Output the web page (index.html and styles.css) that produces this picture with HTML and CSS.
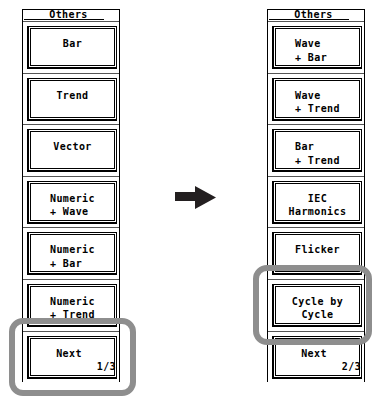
FILE: index.html
```html
<!DOCTYPE html>
<html lang="en">
<head>
  <meta charset="UTF-8" />
  <meta name="viewport" content="width=device-width, initial-scale=1.0"/>
  <title>Others menu</title>
  <link rel="stylesheet" href="styles.css">
</head>
<body>
  <div class="scene">
    <!-- page 1 of the Others soft-key menu -->
    <section class="panel">
      <div class="panel-title">Others</div>
      <div class="cell"><div class="key"><span class="label">Bar</span></div></div>
      <div class="cell"><div class="key"><span class="label">Trend</span></div></div>
      <div class="cell"><div class="key"><span class="label">Vector</span></div></div>
      <div class="cell"><div class="key"><span class="label stack">Numeric<br>+ Wave</span></div></div>
      <div class="cell"><div class="key"><span class="label stack">Numeric<br>+ Bar</span></div></div>
      <div class="cell"><div class="key"><span class="label stack">Numeric<br>+ Trend</span></div></div>
      <div class="cell"><div class="key next"><span class="label">Next</span><span class="page">1/3</span></div></div>
    </section>

    <div class="arrow">
      <svg width="41" height="23" viewBox="0 0 41 23" xmlns="http://www.w3.org/2000/svg">
        <path d="M0 6H20V0L41 11.5L20 23V15H0Z" fill="#231f20" />
      </svg>
    </div>

    <!-- page 2 -->
    <section class="panel">
      <div class="panel-title">Others</div>
      <div class="cell"><div class="key"><span class="label stack wide">Wave<br>+ Bar</span></div></div>
      <div class="cell"><div class="key"><span class="label stack wide">Wave<br>+ Trend</span></div></div>
      <div class="cell"><div class="key"><span class="label stack wide">Bar<br>+ Trend</span></div></div>
      <div class="cell"><div class="key"><span class="label">IEC<br>Harmonics</span></div></div>
      <div class="cell"><div class="key"><span class="label">Flicker</span></div></div>
      <div class="cell"><div class="key"><span class="label">Cycle by<br>Cycle</span></div></div>
      <div class="cell"><div class="key next"><span class="label">Next</span><span class="page">2/3</span></div></div>
    </section>
  </div>

  <!-- highlight rings -->
  <div class="ring ring-left"></div>
  <div class="ring ring-right"></div>
</body>
</html>
```

FILE: styles.css
```css
body {
  margin: 0;
  background: #fff;
  color: #000;
  font-family: "DejaVu Sans Mono", "Liberation Mono", monospace;
  font-weight: bold;
  font-size: 10px;
  letter-spacing: 0.4px;
}
.scene {
  display: flex;
  align-items: flex-start;
  padding: 9px 0 0 22px;
}
.panel {
  width: 98px;
  box-sizing: border-box;
  border-left: 1px solid #000;
  border-right: 1px solid #000;
}
.panel-title {
  height: 13px;
  box-sizing: border-box;
  border-top: 1px solid #000;
  border-bottom: 1px solid #555;
  line-height: 10px;
  text-align: center;
  padding-right: 5px;
  background: linear-gradient(#000, #000) no-repeat 1px 9px / 80px 1px;
}
.cell {
  height: 51.6px;
  box-sizing: border-box;
  padding: 4px 2px 0 4px;
  border-bottom: 1px solid #555;
}
.cell:last-child {
  border-bottom: none;
  height: 50px;
}
.key {
  height: 43px;
  box-sizing: border-box;
  padding-top: 10px;
  border: 1px solid #000;
  border-left-width: 2px;
  border-bottom-width: 2px;
  box-shadow: inset 0 0 0 1px #fff, inset 0 0 0 2px #000, inset 0 -2px 0 #000;
  line-height: 13.5px;
  text-align: center;
}
.label {
  display: inline-block;
  text-align: center;
}
.label.stack {
  text-align: left;
}
.label.wide {
  min-width: 45px;
}
.key.next .label {
  display: block;
  padding-right: 7px;
}
.page {
  display: block;
  text-align: right;
}
.arrow {
  width: 147px;
  padding: 177px 0 0 55px;
  box-sizing: border-box;
}
.arrow svg {
  display: block;
}
.ring {
  position: absolute;
  box-sizing: border-box;
  border: 6px solid #8e8e8e;
  border-radius: 14px;
}
.ring-left {
  left: 9px;
  top: 318px;
  width: 127px;
  height: 78px;
}
.ring-right {
  left: 253px;
  top: 265px;
  width: 119px;
  height: 80px;
}
```
